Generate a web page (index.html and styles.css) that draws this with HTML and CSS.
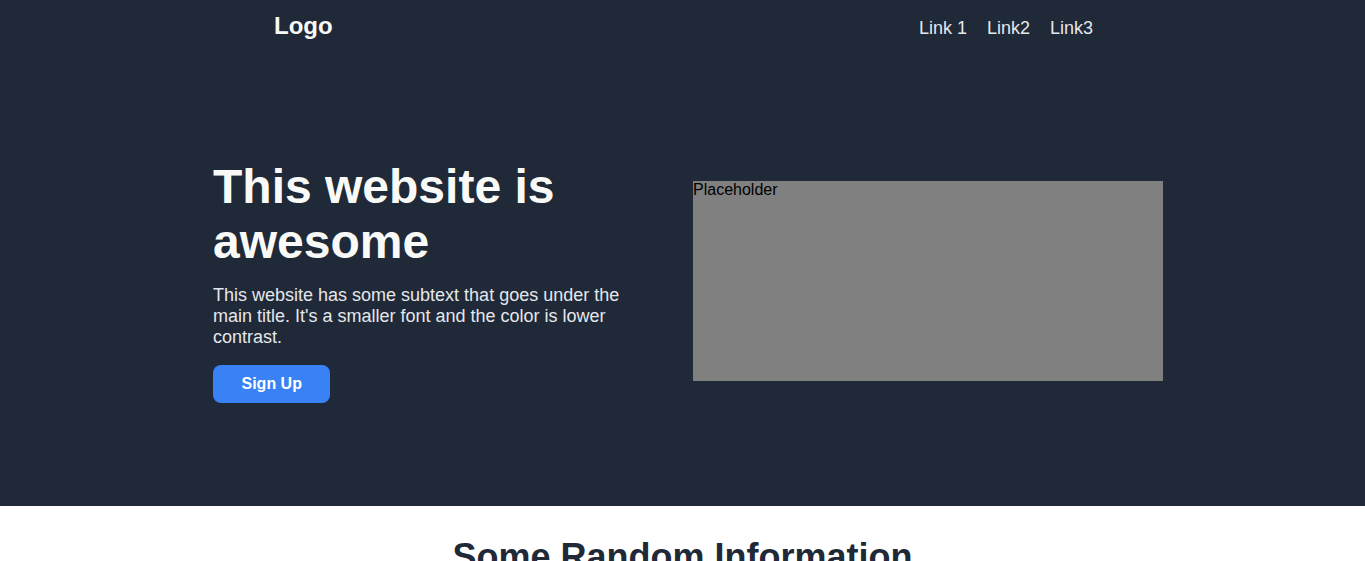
FILE: index.html
```html
<!DOCTYPE html>
<html lang="en">
<head>
<meta charset="UTF-8">
<title>Landing Page</title>
<link rel="stylesheet" href="styles.css">
</head>
<body>
<div class="top">
  <header class="nav">
    <div class="logo">Logo</div>
    <nav class="links">
      <a href="#">Link 1</a>
      <a href="#">Link2</a>
      <a href="#">Link3</a>
    </nav>
  </header>
  <section class="hero">
    <div class="hero-inner">
      <div class="hero-text">
        <h1 class="title">This website is awesome</h1>
        <p class="subtext">This website has some subtext that goes under the main title. It's a smaller font and the color is lower contrast.</p>
        <button class="btn">Sign Up</button>
      </div>
      <div class="placeholder">Placeholder</div>
    </div>
  </section>
</div>
<section class="info">
  <h2 class="info-title">Some Random Information</h2>
</section>
</body>
</html>
```
FILE: styles.css
```css
* { box-sizing: border-box; }
body {
  margin: 0;
  font-family: "Liberation Sans", Arial, sans-serif;
  background: #ffffff;
}
.top {
  background: #1f2937;
  height: 506px;
}
.nav {
  display: flex;
  justify-content: space-between;
  align-items: baseline;
  width: 819px;
  margin-left: calc(50% - 408.5px);
  padding-top: 12px;
  height: 50px;
}
.logo {
  color: #f9faf8;
  font-size: 24px;
  font-weight: bold;
}
.links {
  display: flex;
  gap: 20px;
}
.links a {
  color: #e5e7eb;
  font-size: 18px;
  text-decoration: none;
}
.hero {
  padding-top: 109px;
}
.hero-inner {
  display: flex;
  align-items: center;
  width: 950px;
  margin-left: calc(50% - 469.5px);
}
.hero-text {
  width: 480px;
}
.title {
  margin: 0;
  color: #f9faf8;
  font-size: 48px;
  font-weight: 800;
  width: 440px;
}
.subtext {
  margin: 16px 0 17px;
  color: #e5e7eb;
  font-size: 18px;
  width: 440px;
}
.btn {
  display: block;
  background: #3882f6;
  color: #ffffff;
  border: none;
  border-radius: 8px;
  font-family: inherit;
  font-size: 16px;
  font-weight: bold;
  padding: 10px 28.5px;
  height: 38px;
  white-space: nowrap;
}
.placeholder {
  width: 470px;
  height: 200px;
  background: #808080;
  color: #000000;
  font-size: 16px;
}
.info {
  padding-top: 30px;
  text-align: center;
}
.info-title {
  margin: 0;
  color: #1f2937;
  font-size: 36px;
  font-weight: 800;
}
```
